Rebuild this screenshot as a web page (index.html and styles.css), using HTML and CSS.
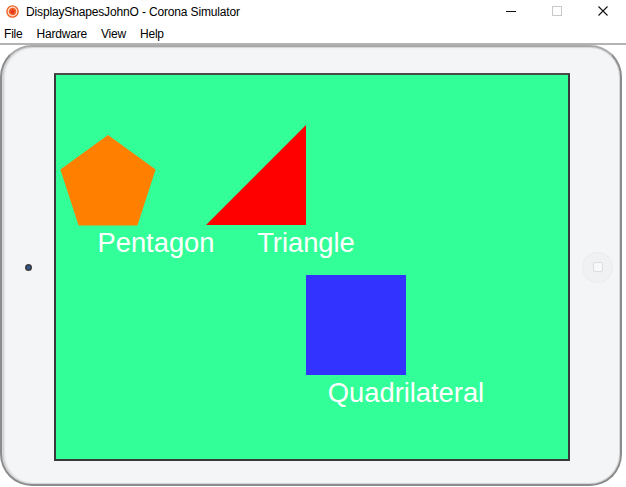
FILE: index.html
```html
<!DOCTYPE html>
<html>
<head>
<meta charset="utf-8">
<link rel="stylesheet" href="styles.css">
</head>
<body>
<div class="window">
  <div class="titlebar">
    <svg class="app-icon" width="13" height="13" viewBox="0 0 13 13">
      <circle cx="6.5" cy="6.5" r="6.3" fill="#f0642a"/>
      <circle cx="6.5" cy="6.5" r="4.3" fill="none" stroke="#fde0cc" stroke-width="1.2"/>
      <polygon points="6.5,3.4 7.3,5.6 9.6,5.6 7.8,7 8.5,9.3 6.5,7.9 4.5,9.3 5.2,7 3.4,5.6 5.7,5.6" fill="#e8321e"/>
    </svg>
    <span class="title">DisplayShapesJohnO - Corona Simulator</span>
    <div class="controls">
      <div class="ctl">
        <svg width="10" height="10" viewBox="0 0 10 10"><line x1="0" y1="5.5" x2="10" y2="5.5" stroke="#111" stroke-width="1"/></svg>
      </div>
      <div class="ctl">
        <svg width="10" height="10" viewBox="0 0 10 10"><rect x="0.5" y="0.5" width="9" height="9" fill="none" stroke="#c8c8c8" stroke-width="1"/></svg>
      </div>
      <div class="ctl">
        <svg width="10" height="10" viewBox="0 0 10 10"><path d="M0.5 0.5 L9.5 9.5 M9.5 0.5 L0.5 9.5" stroke="#111" stroke-width="1.1"/></svg>
      </div>
    </div>
  </div>
  <div class="menubar">
    <span class="menu-item">File</span>
    <span class="menu-item">Hardware</span>
    <span class="menu-item">View</span>
    <span class="menu-item">Help</span>
  </div>
  <div class="stage">
    <div class="device">
      <div class="bezel-left">
        <div class="camera"></div>
      </div>
      <div class="screen">
        <svg class="canvas" width="512" height="384" viewBox="0 0 512 384">
          <polygon points="52,60 99.6,94.6 81.4,150.5 22.6,150.5 4.4,94.6" fill="#ff8000"/>
          <polygon points="250,50 250,150 150,150" fill="#ff0000"/>
          <rect x="250" y="200" width="100" height="100" fill="#3333ff"/>
          <text class="label" x="100" y="177" text-anchor="middle">Pentagon</text>
          <text class="label" x="250" y="177" text-anchor="middle">Triangle</text>
          <text class="label" x="350" y="327" text-anchor="middle">Quadrilateral</text>
        </svg>
      </div>
      <div class="bezel-right">
        <div class="home"><div class="home-square"></div></div>
      </div>
    </div>
  </div>
</div>
</body>
</html>
```
FILE: styles.css
```css
html, body {
  margin: 0;
  padding: 0;
  background: #ffffff;
}
.window {
  width: 626px;
  height: 487px;
  overflow: hidden;
  background: #ffffff;
  font-family: "Liberation Sans", Arial, sans-serif;
  font-size: 12px;
  color: #000;
}
.titlebar {
  height: 22px;
  display: flex;
  align-items: center;
}
.app-icon {
  margin-left: 6px;
  margin-right: 7px;
  flex: none;
}
.title {
  letter-spacing: -0.15px;
  padding-top: 2px;
}
.controls {
  margin-left: auto;
  display: flex;
  height: 22px;
}
.ctl {
  width: 46px;
  height: 22px;
  display: flex;
  align-items: center;
  justify-content: center;
}
.menubar {
  display: flex;
  align-items: center;
  padding-left: 4px;
  padding-top: 2px;
  gap: 14px;
  border-bottom: 2px solid #b4b4b4;
  box-sizing: border-box;
  height: 23px;
}
.menu-item {
  letter-spacing: -0.2px;
}
.stage {
  height: 442px;
  padding-right: 4px;
}
.device {
  height: 441px;
  box-sizing: border-box;
  border: 2px solid #8c8c8c;
  border-top-color: #a9a9a9;
  border-radius: 32px;
  background: #f4f5f7;
  box-shadow: inset 0 0 0 1px #d6d7d9, inset 2px 0 2px #c6c7c9;
  display: flex;
  align-items: center;
  padding-top: 3px;
}
.bezel-left {
  width: 52px;
  display: flex;
  justify-content: center;
}
.camera {
  width: 7px;
  height: 7px;
  border-radius: 50%;
  background: radial-gradient(circle, #2f5690 0 1.5px, #3a3d44 2px);
}
.screen {
  border: 2px solid #3a3a3a;
  border-top-color: #4a4a4a;
  background: #33ff99;
  width: 512px;
  height: 384px;
}
.canvas {
  display: block;
}
.label {
  font-family: "Liberation Sans", Arial, sans-serif;
  font-size: 27.3px;
  fill: #ffffff;
}
.bezel-right {
  flex: 1;
  display: flex;
  justify-content: center;
  padding-left: 5px;
}
.home {
  width: 29px;
  height: 29px;
  border-radius: 50%;
  background: #f0f1f3;
  box-shadow: 0 0 0 1px #ebecee;
  display: flex;
  align-items: center;
  justify-content: center;
}
.home-square {
  width: 8px;
  height: 8px;
  border: 1px solid #dcdde0;
  border-radius: 2px;
  background: #f8f9fa;
}
```
